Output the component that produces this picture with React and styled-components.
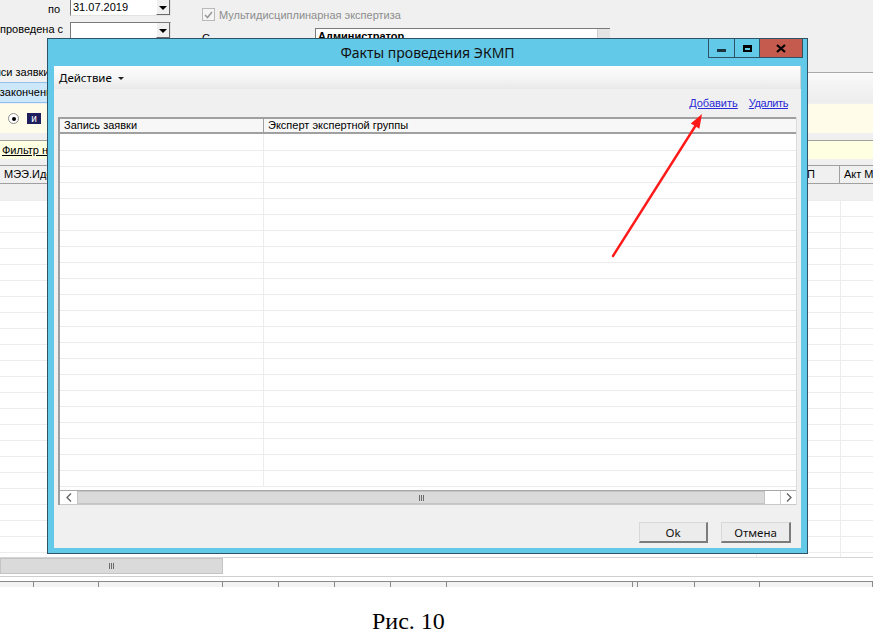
import React from "react";
import styled, { createGlobalStyle } from "styled-components";

const GlobalStyle = createGlobalStyle`
  html, body { margin: 0; padding: 0; background: #fff; }
  body { font-family: "Liberation Sans", Arial, sans-serif; font-size: 11px; color: #000; }
`;

const uiFont = `"Noto Sans", "Liberation Sans", sans-serif`;

const Page = styled.div`
  width: 873px;
  height: 639px;
  position: relative;
  overflow: hidden;
  background: #fff;
`;

/* ---------- background application ---------- */

const Screen = styled.div`
  position: relative;
  height: 587px;
  background: #f0f0f0;
  overflow: hidden;
  display: flex;
  flex-direction: column;
`;

const FormRow = styled.div`
  display: flex;
  align-items: flex-start;
  height: ${(p) => p.h}px;
`;

const FieldLabel = styled.div`
  width: 70px;
  box-sizing: border-box;
  padding-right: 10px;
  text-align: right;
  line-height: ${(p) => p.lh || 18}px;
  white-space: nowrap;
`;

const Combo = styled.div`
  width: 101px;
  height: ${(p) => p.h}px;
  margin-top: ${(p) => p.mt || 0}px;
  box-sizing: border-box;
  background: #fff;
  border-left: 1px solid #7a7a7a;
  border-top: ${(p) => (p.cut ? "none" : "1px solid #7a7a7a")};
  border-right: 1px solid #e3e3e3;
  border-bottom: 1px solid #e3e3e3;
  display: flex;
  align-items: stretch;
`;

const ComboText = styled.div`
  flex: 1;
  padding-left: 2px;
  line-height: 15px;
  font-size: 11px;
`;

const ComboButton = styled.div`
  width: 14px;
  box-sizing: border-box;
  background: #f0f0f0;
  border-right: 1px solid #696969;
  border-bottom: 1px solid #696969;
  border-left: 1px solid #fff;
  display: flex;
  align-items: center;
  justify-content: center;
  &::after {
    content: "";
    border-left: 4px solid transparent;
    border-right: 4px solid transparent;
    border-top: 4px solid #000;
    margin-top: 2px;
  }
`;

const CheckGroup = styled.div`
  margin-left: 31px;
  margin-top: 8px;
  display: flex;
  align-items: center;
  gap: 4px;
  color: #8d8d8d;
`;

const CheckBox = styled.div`
  width: 11px;
  height: 11px;
  border: 1px solid #b9b9b9;
  background: #f4f4f4;
  display: flex;
  align-items: center;
  justify-content: center;
`;

const SmallLabel = styled.div`
  margin-left: 31px;
  margin-top: 11px;
  width: 113px;
`;

const OwnerField = styled.div`
  width: 295px;
  height: 14px;
  margin-top: 7px;
  box-sizing: border-box;
  background: #fff;
  border-left: 1px solid #7a7a7a;
  border-top: 1px solid #7a7a7a;
  display: flex;
  font-weight: bold;
  font-size: 11px;
  line-height: 14px;
  padding-left: 2px;
  overflow: hidden;
  & > span { flex: 1; }
  & > i { width: 12px; background: #e4e4e4; border-left: 1px solid #cfcfcf; }
`;

const TopPanel = styled.div`
  margin-top: 22px;
  height: 42px;
  display: flex;
`;

const SideList = styled.div`
  width: 200px;
  display: flex;
  flex-direction: column;
`;

const SideItem = styled.div`
  height: ${(p) => p.h}px;
  line-height: ${(p) => p.h}px;
  white-space: nowrap;
  text-indent: ${(p) => p.indent}px;
  background: ${(p) => (p.selected ? "#cde8fb" : "transparent")};
  border-top: ${(p) => (p.selected ? "1px solid #8fc1ea" : "none")};
  border-bottom: ${(p) => (p.selected ? "1px solid #8fc1ea" : "none")};
`;

const MainToolbar = styled.div`
  flex: 1;
  margin-top: 10px;
  border-top: 1px solid #a9a9a9;
  background: linear-gradient(#fbfbfb 0%, #f6f6f6 25%, #ededed 100%);
  margin-bottom: 2px;
`;

const YellowPanel = styled.div`
  height: 29px;
  background: #fffde9;
  display: flex;
  align-items: center;
  gap: 4px;
  padding-left: 8px;
`;

const Radio = styled.div`
  width: 9px;
  height: 9px;
  border-radius: 50%;
  background: #fff;
  border: 1px solid #8d8d8d;
  display: flex;
  align-items: center;
  justify-content: center;
  &::after {
    content: "";
    width: 4px;
    height: 4px;
    border-radius: 50%;
    background: #000;
  }
`;

const Tag = styled.div`
  width: 14px;
  height: 11px;
  background: #1f1f5e;
  color: #fff;
  font-size: 10px;
  line-height: 11px;
  text-align: center;
  margin-left: 4px;
`;

const FilterRow = styled.div`
  margin-top: 7px;
  border-top: 1px solid #a0a0a0;
  height: 18px;
  background: #ffffe1;
  line-height: 18px;
  padding-left: 2px;
  & > span { text-decoration: underline; }
`;

const BgHeader = styled.div`
  margin-top: 6px;
  height: 17px;
  display: flex;
  border-top: 1px solid #a0a0a0;
  border-bottom: 1px solid #a0a0a0;
  background: #f0f0f0;
`;

const BgHeadCell = styled.div`
  width: ${(p) => (p.w ? `${p.w}px` : "auto")};
  flex: ${(p) => (p.w ? "none" : 1)};
  box-sizing: border-box;
  border-right: 1px solid #a0a0a0;
  padding-left: ${(p) => (p.pl !== undefined ? p.pl : 4)}px;
  line-height: 17px;
  white-space: nowrap;
  overflow: hidden;
  &:last-child { border-right: none; }
`;

const BgBody = styled.div`
  margin-top: 16px;
  flex: 1;
  background: #fff;
  display: flex;
  flex-direction: column;
  overflow: hidden;
`;

const BgRow = styled.div`
  height: 16px;
  flex: none;
  display: flex;
  border-top: 1px solid #ececec;
  box-sizing: border-box;
`;

const BgCell = styled.div`
  width: ${(p) => (p.w ? `${p.w}px` : "auto")};
  flex: ${(p) => (p.w ? "none" : 1)};
  box-sizing: border-box;
  border-right: ${(p) => (p.line ? "1px solid #ececec" : "none")};
`;

const BgScroll = styled.div`
  height: 16px;
  flex: none;
  display: flex;
  background: #fff;
  border-top: 1px solid #d5d5d5;
`;

const Thumb = styled.div`
  width: ${(p) => (p.w ? `${p.w}px` : "auto")};
  flex: ${(p) => (p.w ? "none" : 1)};
  background: #dadada;
  box-sizing: border-box;
  border: 1px solid #c4c4c4;
  display: flex;
  align-items: center;
  justify-content: center;
`;

const Grip = styled.div`
  display: flex;
  gap: 1px;
  & > i { width: 1px; height: 6px; background: #6a6a6a; }
`;

const BgFooter = styled.div`
  height: 13px;
  flex: none;
  background: #fff;
  display: flex;
  flex-direction: column;
`;

const FooterLine = styled.div`
  margin-top: 2px;
  border-top: 1px solid #cfcfcf;
  height: 4px;
`;

const FooterCells = styled.div`
  flex: 1;
  border-top: 1px solid #8a8a8a;
  display: flex;
  background: #f3f3f3;
`;

const FooterCell = styled.div`
  width: ${(p) => p.w}px;
  flex: none;
  box-sizing: border-box;
  border-right: 1px solid #8a8a8a;
`;

/* ---------- dialog window ---------- */

const Dialog = styled.div`
  position: absolute;
  left: 47px;
  top: 38px;
  width: 761px;
  height: 516px;
  box-sizing: border-box;
  background: #63c9e9;
  border: 1px solid #2e5366;
  display: flex;
  flex-direction: column;
`;

const TitleBar = styled.div`
  height: 27px;
  flex: none;
  display: grid;
  grid-template-columns: 1fr auto 1fr;
  align-items: start;
`;

const Title = styled.div`
  grid-column: 2;
  font-family: ${uiFont};
  font-size: 14px;
  line-height: 27px;
  color: #111;
`;

const WinButtons = styled.div`
  grid-column: 3;
  justify-self: end;
  display: flex;
  margin-right: 4px;
`;

const WinButton = styled.div`
  width: ${(p) => p.w}px;
  height: 19px;
  box-sizing: border-box;
  background: ${(p) => (p.close ? "#c55a4f" : "#63c9e9")};
  border: 1px solid #2e5366;
  border-top: none;
  margin-left: -1px;
  display: flex;
  align-items: center;
  justify-content: center;
`;

const MinGlyph = styled.div`
  width: 9px;
  height: 3px;
  background: #1c3440;
  margin-top: 5px;
`;

const MaxGlyph = styled.div`
  width: 9px;
  height: 7px;
  box-sizing: border-box;
  border: 2px solid #000;
  border-top-width: 3px;
`;

const Client = styled.div`
  flex: 1;
  margin: 0 6px 5px 6px;
  background: #f0f0f0;
  display: flex;
  flex-direction: column;
  min-height: 0;
`;

const MenuStrip = styled.div`
  height: 23px;
  flex: none;
  display: flex;
  align-items: center;
  gap: 6px;
  padding-left: 5px;
  font-family: ${uiFont};
  font-size: 11.5px;
  background: linear-gradient(#fdfdfd 0%, #f4f4f4 55%, #e9e9e9 100%);
  border-right: 1px solid #d4d4d4;
`;

const Caret = styled.span`
  border-left: 3px solid transparent;
  border-right: 3px solid transparent;
  border-top: 3px solid #222;
  margin-top: 1px;
`;

const LinkBar = styled.div`
  height: 28px;
  flex: none;
  display: flex;
  justify-content: flex-end;
  align-items: center;
  gap: 11px;
  padding-right: 13px;
`;

const Link = styled.a`
  color: #2a2ad8;
  text-decoration: underline;
  font-size: 11px;
  letter-spacing: ${(p) => p.ls || 0}px;
  cursor: pointer;
`;

const Grid = styled.div`
  height: 388px;
  flex: none;
  margin: 0 4px;
  box-sizing: border-box;
  border-left: 2px solid #a0a0a0;
  border-right: 1px solid #dcdcdc;
  background: #fff;
  display: flex;
  flex-direction: column;
`;

const GridHead = styled.div`
  height: 17px;
  flex: none;
  box-sizing: border-box;
  display: flex;
  border-top: 2px solid #a0a0a0;
  border-bottom: 2px solid #a0a0a0;
  background: #f7f7f7;
`;

const HeadCell = styled.div`
  width: ${(p) => (p.w ? `${p.w}px` : "auto")};
  flex: ${(p) => (p.w ? "none" : 1)};
  box-sizing: border-box;
  padding-left: 4px;
  line-height: 13px;
  border-right: ${(p) => (p.w ? "1px solid #a0a0a0" : "none")};
  white-space: nowrap;
`;

const GridBody = styled.div`
  flex: 1;
  overflow: hidden;
  display: flex;
  flex-direction: column;
`;

const GridRow = styled.div`
  height: 16px;
  flex: none;
  box-sizing: border-box;
  display: flex;
  border-bottom: 1px solid #ececec;
  &:first-child { height: 17px; }
`;

const GridCell = styled.div`
  width: ${(p) => (p.w ? `${p.w}px` : "auto")};
  flex: ${(p) => (p.w ? "none" : 1)};
  box-sizing: border-box;
  border-right: ${(p) => (p.w ? "1px solid #ececec" : "none")};
`;

const HScroll = styled.div`
  height: 15px;
  flex: none;
  box-sizing: border-box;
  display: flex;
  border-top: 1px solid #a8a8a8;
  border-bottom: 1px solid #c8c8c8;
  background: #fff;
`;

const ArrowBtn = styled.div`
  width: ${(p) => p.w}px;
  flex: none;
  box-sizing: border-box;
  background: #fff;
  border-left: ${(p) => (p.right ? "1px solid #d0d0d0" : "none")};
  display: flex;
  align-items: center;
  justify-content: center;
`;

const Track = styled.div`
  width: ${(p) => p.w}px;
  flex: none;
  background: #fff;
`;

const ButtonBar = styled.div`
  flex: 1;
  display: flex;
  justify-content: flex-end;
  align-items: flex-start;
  gap: 13px;
  padding: 17px 10px 0 0;
`;

const PushButton = styled.button`
  width: ${(p) => p.w}px;
  height: 21px;
  box-sizing: border-box;
  background: #ececec;
  border: 1px solid #d8d8d8;
  border-right: 2px solid #7c7c7c;
  border-bottom: 2px solid #7c7c7c;
  font-family: ${uiFont};
  font-size: 11.5px;
  color: #111;
  padding: 0;
`;

/* ---------- annotation + caption ---------- */

const Annotation = styled.svg`
  position: absolute;
  left: 0;
  top: 0;
  pointer-events: none;
`;

const Caption = styled.div`
  font-family: "Liberation Serif", "Times New Roman", serif;
  font-size: 24px;
  line-height: 30px;
  padding: 19px 0 0 372px;
  color: #000;
`;

const ChevronLeft = () => (
  <svg width="6" height="9" viewBox="0 0 6 9">
    <path d="M5 0.5 L1 4.5 L5 8.5" fill="none" stroke="#606060" strokeWidth="1.3" />
  </svg>
);

const ChevronRight = () => (
  <svg width="6" height="9" viewBox="0 0 6 9">
    <path d="M1 0.5 L5 4.5 L1 8.5" fill="none" stroke="#606060" strokeWidth="1.3" />
  </svg>
);

const footerWidths = [34, 65, 124, 56, 56, 56, 56, 186, 5, 57, 65, 113];

export default function App() {
  const bgRows = Array.from({ length: 23 });
  const dlgRows = Array.from({ length: 22 });

  return (
    <Page>
      <GlobalStyle />
      <Screen>
        <FormRow h={21}>
          <FieldLabel lh={19}>по</FieldLabel>
          <Combo h={16} cut>
            <ComboText>31.07.2019</ComboText>
            <ComboButton />
          </Combo>
          <CheckGroup>
            <CheckBox>
              <svg width="9" height="8" viewBox="0 0 9 8">
                <path d="M1 4 L3.5 6.5 L8 1" fill="none" stroke="#9a9a9a" strokeWidth="1.6" />
              </svg>
            </CheckBox>
            <span>Мультидисциплинарная экспертиза</span>
          </CheckGroup>
        </FormRow>
        <FormRow h={19}>
          <FieldLabel lh={17}>проведена с</FieldLabel>
          <Combo h={17} mt={1}>
            <ComboText />
            <ComboButton />
          </Combo>
          <SmallLabel>С</SmallLabel>
          <OwnerField>
            <span>Администратор</span>
            <i />
          </OwnerField>
        </FormRow>

        <TopPanel>
          <SideList>
            <SideItem h={20} indent={-24}>Записи заявки</SideItem>
            <SideItem h={19} indent={-14} selected>Незаконченные</SideItem>
          </SideList>
          <MainToolbar />
        </TopPanel>

        <YellowPanel>
          <Radio />
          <Tag>и</Tag>
        </YellowPanel>

        <FilterRow>
          <span>Фильтр не задан</span>
        </FilterRow>

        <BgHeader>
          <BgHeadCell w={120}>МЭЭ.Идентификатор</BgHeadCell>
          <BgHeadCell />
          <BgHeadCell w={84} pl={0}>Дата ЭКМП</BgHeadCell>
          <BgHeadCell w={33}>Акт МЭЭ</BgHeadCell>
        </BgHeader>

        <BgBody>
          {bgRows.map((_, i) => (
            <BgRow key={i}>
              <BgCell w={120} />
              <BgCell line />
              <BgCell w={84} line />
              <BgCell w={32} />
            </BgRow>
          ))}
        </BgBody>

        <BgScroll>
          <Thumb w={223}>
            <Grip>
              <i />
              <i />
              <i />
            </Grip>
          </Thumb>
          <Track w={650} />
        </BgScroll>

        <BgFooter>
          <FooterLine />
          <FooterCells>
            {footerWidths.map((w, i) => (
              <FooterCell key={i} w={w} />
            ))}
          </FooterCells>
        </BgFooter>

        <Dialog>
          <TitleBar>
            <Title>Факты проведения ЭКМП</Title>
            <WinButtons>
              <WinButton w={27}>
                <MinGlyph />
              </WinButton>
              <WinButton w={26}>
                <MaxGlyph />
              </WinButton>
              <WinButton w={44} close>
                <svg width="10" height="9" viewBox="0 0 10 9">
                  <path d="M1 1 L9 8 M9 1 L1 8" stroke="#000" strokeWidth="2.2" />
                </svg>
              </WinButton>
            </WinButtons>
          </TitleBar>

          <Client>
            <MenuStrip>
              <span>Действие</span>
              <Caret />
            </MenuStrip>

            <LinkBar>
              <Link>Добавить</Link>
              <Link ls={-0.4}>Удалить</Link>
            </LinkBar>

            <Grid>
              <GridHead>
                <HeadCell w={204}>Запись заявки</HeadCell>
                <HeadCell>Эксперт экспертной группы</HeadCell>
              </GridHead>
              <GridBody>
                {dlgRows.map((_, i) => (
                  <GridRow key={i}>
                    <GridCell w={204} />
                    <GridCell />
                  </GridRow>
                ))}
              </GridBody>
              <HScroll>
                <ArrowBtn w={17}>
                  <ChevronLeft />
                </ArrowBtn>
                <Thumb>
                  <Grip>
                    <i />
                    <i />
                    <i />
                  </Grip>
                </Thumb>
                <Track w={15} />
                <ArrowBtn w={16} right>
                  <ChevronRight />
                </ArrowBtn>
              </HScroll>
            </Grid>

            <ButtonBar>
              <PushButton w={69}>Ok</PushButton>
              <PushButton w={70}>Отмена</PushButton>
            </ButtonBar>
          </Client>
        </Dialog>
      </Screen>

      <Caption>Рис. 10</Caption>

      <Annotation width="873" height="639" viewBox="0 0 873 639">
        <line x1="613" y1="256" x2="696" y2="125" stroke="#ff1a1a" strokeWidth="2.4" strokeLinecap="round" />
        <polygon points="702,114 699.4,128.8 690.8,123.4" fill="#ff1a1a" />
      </Annotation>
    </Page>
  );
}
